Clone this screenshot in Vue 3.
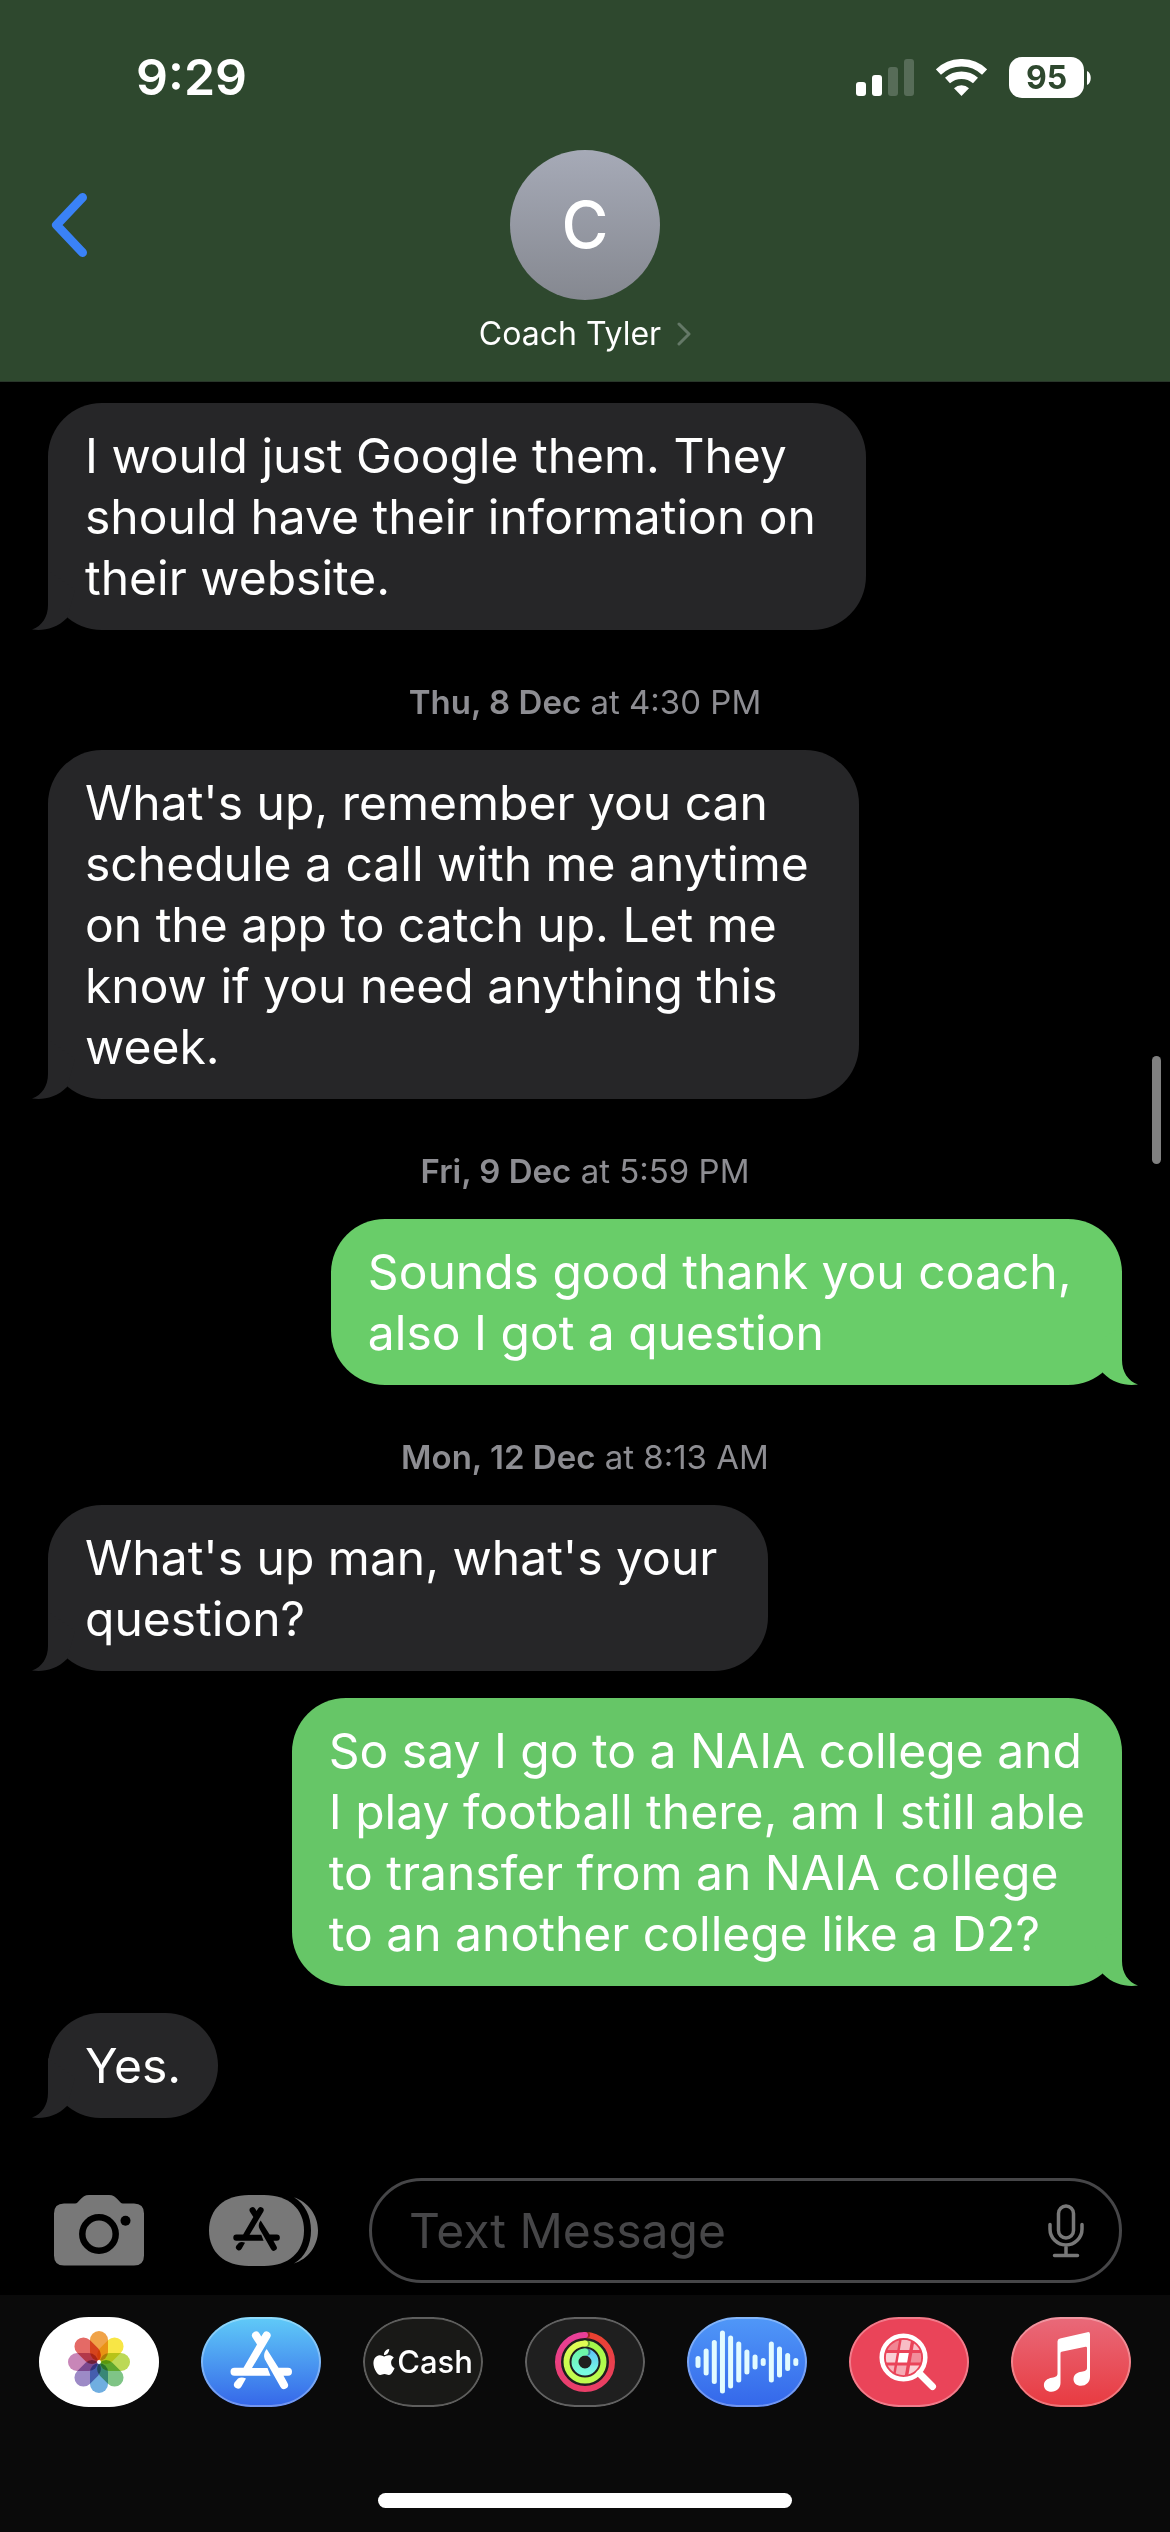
<template>
  <div class="phone">
    <header class="top">
      <div class="status-bar">
        <span class="clock">9:29</span>
        <div class="status-icons">
          <svg class="signal" viewBox="0 0 58 37" aria-label="Signal">
            <rect x="0" y="23" width="10" height="14" rx="3" />
            <rect x="16" y="16" width="10" height="21" rx="3" />
            <rect class="off" x="32" y="8" width="10" height="29" rx="3" />
            <rect class="off" x="48" y="0" width="10" height="37" rx="3" />
          </svg>
          <svg class="wifi" viewBox="0 0 51 37" aria-label="Wi-Fi">
            <path class="arc" d="M2.4 13A33.3 33.3 0 0 1 48.6 13" />
            <path class="arc" d="M11.5 21.6A20.8 20.8 0 0 1 39.5 21.6" />
            <path class="dot" d="M25.5 37L18 29.2A11.3 11.3 0 0 1 33 29.2z" />
          </svg>
          <div class="battery">
            <span class="level">95</span>
            <svg class="nub" viewBox="0 0 4 14"><path d="M0 0C5 2 5 12 0 14z" /></svg>
          </div>
        </div>
      </div>

      <nav class="nav-row">
        <button class="back" type="button" aria-label="Back">
          <svg viewBox="0 0 38 64"><path d="M32.5 4.5L6.5 32l26 27.5" /></svg>
        </button>
        <button class="contact" type="button">
          <span class="avatar">C</span>
          <span class="name">
            {{ contact }}
            <svg viewBox="0 0 14 24"><path d="M2 2l10 10L2 22" /></svg>
          </span>
        </button>
      </nav>
    </header>

    <main class="thread">
      <template v-for="(item, i) in thread" :key="i">
        <p v-if="item.day" class="stamp"><b>{{ item.day }}</b> at {{ item.time }}</p>
        <div v-else class="bubble" :class="[item.from, { late: item.late }]">
          <span v-text="item.text"></span>
          <svg class="tail" viewBox="0 0 44 60">
            <path d="M17 0V35C17 47 11 56 1 59.5C12 61 25 59 36 48L44 20z" />
          </svg>
        </div>
      </template>
      <div class="scroll-thumb"></div>
    </main>

    <form class="composer" @submit.prevent>
      <button class="tool camera" type="button" aria-label="Camera">
        <svg viewBox="0 0 90 71">
          <path d="M10 8.5H21C25 8.5 27 0 35 0H55C63 0 65 8.5 69 8.5H80Q90 8.5 90 18.5V60.5Q90 70.5 80 70.5H10Q0 70.5 0 60.5V18.5Q0 8.5 10 8.5z" />
          <circle class="lens" cx="45" cy="39" r="16.7" />
          <circle class="flash" cx="71.5" cy="25.7" r="5" />
        </svg>
      </button>
      <button class="tool apps" type="button" aria-label="Apps">
        <svg viewBox="0 0 109 71">
          <path d="M40 0H55C80 0 95 14 95 35.5S80 71 55 71H40C15 71 0 57 0 35.5S15 0 40 0z" />
          <path d="M85 2.3C99 7 109 20 109 35.5S99 64 85 68.500C96 62 102 50 102 35.5S96 9 85 2.3z" />
          <g class="cut" transform="translate(47.6 34) scale(.757) translate(-60.3 -43.3)">
            <path v-for="d in storeGlyph" :key="d" :d="d" />
          </g>
        </svg>
      </button>
      <div class="field">
        <input v-model="draft" type="text" placeholder="Text Message" aria-label="Text Message" />
        <button class="mic" type="button" aria-label="Dictate">
          <svg viewBox="0 0 36 54">
            <rect x="10.5" y="2" width="15" height="32" rx="7.5" />
            <path d="M2 20.5V25a16 16 0 0 0 32 0V20.5M18 41V51M6.5 51.5H29.5" />
          </svg>
        </button>
      </div>
    </form>

    <footer class="drawer">
      <div class="app-row">
        <button class="app photos" type="button" aria-label="Photos">
          <svg viewBox="0 0 120 90">
            <rect
              v-for="(c, i) in petals"
              :key="c"
              class="petal"
              x="51" y="14" width="18" height="30" rx="9"
              :fill="c"
              :transform="`rotate(${i * 45} 60 45)`"
            />
            <circle cx="60" cy="45" r="2" fill="#fff" />
          </svg>
        </button>

        <button class="app store" type="button" aria-label="App Store">
          <svg viewBox="0 0 120 90"><path v-for="d in storeGlyph" :key="d" :d="d" /></svg>
        </button>

        <button class="app cash" type="button">
          <svg class="apple" viewBox="2 0 20 24" aria-label="Apple">
            <path d="M12.152 6.896c-.948 0-2.415-1.078-3.96-1.04-2.04.027-3.91 1.183-4.961 3.014-2.117 3.675-.546 9.103 1.519 12.09 1.013 1.454 2.208 3.09 3.792 3.039 1.52-.065 2.09-.987 3.935-.987 1.831 0 2.35.987 3.96.948 1.637-.026 2.676-1.48 3.676-2.948 1.156-1.688 1.636-3.325 1.662-3.415-.039-.013-3.182-1.221-3.22-4.857-.026-3.04 2.48-4.494 2.597-4.559-1.429-2.09-3.623-2.324-4.39-2.376-2-.156-3.675 1.09-4.61 1.09zM15.53 3.83c.843-1.012 1.4-2.427 1.245-3.83-1.207.052-2.662.805-3.532 1.818-.78.896-1.454 2.338-1.273 3.714 1.338.104 2.715-.688 3.559-1.701" />
          </svg>
          <span>Cash</span>
        </button>

        <button class="app fitness" type="button" aria-label="Fitness">
          <svg viewBox="0 0 120 90">
            <defs>
              <template v-for="r in rings" :key="r.r">
                <linearGradient :id="`a${r.r}`" gradientUnits="userSpaceOnUse" x1="0" x2="0" :y1="45 - r.r" :y2="45 + r.r">
                  <stop offset="0" :stop-color="r.start" />
                  <stop offset="1" :stop-color="r.mid" />
                </linearGradient>
                <linearGradient :id="`b${r.r}`" gradientUnits="userSpaceOnUse" x1="0" x2="0" :y1="45 - r.r" :y2="45 + r.r">
                  <stop offset="0" :stop-color="r.end" />
                  <stop offset="1" :stop-color="r.mid" />
                </linearGradient>
              </template>
            </defs>
            <g v-for="r in rings" :key="r.r" fill="none" :stroke-width="r.w">
              <path :d="`M60 ${45 - r.r}A${r.r} ${r.r} 0 0 1 60 ${45 + r.r}`" :stroke="`url(#a${r.r})`" />
              <circle cx="62" :cy="45 - r.r" :r="r.w / 2" fill="#000" opacity=".35" />
              <path :d="`M60 ${45 + r.r}A${r.r} ${r.r} 0 0 1 60 ${45 - r.r}`" :stroke="`url(#b${r.r})`" />
              <circle cx="60" :cy="45 - r.r" :r="r.w / 2" :fill="r.end" />
            </g>
          </svg>
        </button>

        <button class="app audio" type="button" aria-label="Audio">
          <svg viewBox="0 0 120 90">
            <rect
              v-for="(h, i) in wave"
              :key="i"
              :x="8.5 + i * 8.15"
              :y="45 - h / 2"
              width="5"
              :height="h"
              rx="2.5"
            />
          </svg>
        </button>

        <button class="app images" type="button" aria-label="#images">
          <svg viewBox="0 0 120 90">
            <clipPath id="lens"><circle cx="54.5" cy="40.5" r="17.7" /></clipPath>
            <g clip-path="url(#lens)">
              <g transform="translate(54.5 40.5) skewX(-10)">
                <rect
                  v-for="(a, i) in tiles"
                  :key="i"
                  :x="[-18, -5, 8][i % 3]"
                  :y="[-18, -4.5, 8][Math.floor(i / 3)]"
                  :width="[10.5, 9.5, 14][i % 3]"
                  :height="[10.5, 9.5, 12][Math.floor(i / 3)]"
                  fill="#fff"
                  :opacity="a"
                />
              </g>
            </g>
            <circle class="rim" cx="54.5" cy="40.5" r="21.8" />
            <path class="handle" d="M70.5 56.5L83.5 69.5" />
          </svg>
        </button>

        <button class="app music" type="button" aria-label="Music">
          <svg viewBox="0 0 120 90">
            <path d="M46.5 24.5q0-2.4 2.5-3L76.5 15.2q2.5-.5 2.5 2V60c0 5-4 8.8-9 8.8c-4.5 0-7.5-2.7-7.5-6.5c0-4.5 3.5-6.8 8-7.5c3.5-.6 5.5-1.2 5.5-4V31q0-1.5-1.5-1.2L50.5 34.8q-1 .3-1 1.5V66c0 5-4 8.7-9 8.7c-4.5 0-7.6-2.7-7.6-6.5c0-4.4 3.3-6.7 8-7.5c3.5-.6 5.6-1.3 5.6-4.2z" />
          </svg>
        </button>
      </div>
      <div class="home-bar"></div>
    </footer>
  </div>
</template>

<script setup>
import { ref } from 'vue'

const contact = 'Coach Tyler'
const draft = ref('')

// the space before each line break counts in the bubble width
const thread = [
  { from: 'received', text: 'I would just Google them. They \nshould have their information on \ntheir website.' },
  { day: 'Thu, 8 Dec', time: '4:30 PM' },
  { from: 'received', text: "What's up, remember you can \nschedule a call with me anytime \non the app to catch up. Let me \nknow if you need anything this \nweek." },
  { day: 'Fri, 9 Dec', time: '5:59 PM' },
  { from: 'sent', text: 'Sounds good thank you coach, \nalso I got a question' },
  { day: 'Mon, 12 Dec', time: '8:13 AM' },
  { from: 'received', text: "What's up man, what's your \nquestion?" },
  { from: 'sent', late: true, text: 'So say I go to a NAIA college and\nI play football there, am I still able\nto transfer from an NAIA college\nto an another college like a D2?' },
  { from: 'received', text: 'Yes.' }
]

const storeGlyph = [
  'M51.5 20.5a4 4 0 0 1 7-4l1.8 3 1.8-3a4 4 0 0 1 7 4L51 51H66.5L69.5 58.7H33.5a4 4 0 0 1 0-8H42.5L56 27.5z',
  'M65.7 32C62.5 36 62.5 40 64.5 43.5L79.5 70a4 4 0 0 0 7-4L82.5 58.7H87a4 4 0 0 0 0-8H77.5z',
  'M37 61.5Q40.5 59.5 45 61.5L40.5 69.5a4 4 0 0 1-7-4z'
]

const petals = ['#f0a348', '#f8e645', '#bcd956', '#7fc486', '#70aee0', '#9c8ac6', '#c886b8', '#e46a66']

const rings = [
  { r: 27, w: 6, start: '#ea4130', mid: '#e93f68', end: '#e93f98' },
  { r: 18.5, w: 6, start: '#a2f94b', mid: '#bdfc4e', end: '#e0fb54' },
  { r: 10, w: 7, start: '#5fc8f6', mid: '#78fbe0', end: '#6cf6a8' }
]

const wave = [12, 27, 44, 63, 53, 41, 25, 15, 8, 41, 31, 18, 8]

const tiles = [0.35, 0.65, 0.65, 0.75, 1, 0.4, 0.6, 0.55, 0.75]
</script>

<style>
body {
  margin: 0;
  background: #000;
}
</style>

<style scoped>
.phone {
  min-height: 100vh;
  display: flex;
  flex-direction: column;
  background: #000;
  color: #fff;
  font-family: Inter, "Liberation Sans", sans-serif;
}

button {
  padding: 0;
  border: 0;
  background: none;
  color: inherit;
  font: inherit;
  cursor: pointer;
}

svg {
  display: block;
}

/* Header */
.top {
  box-sizing: border-box;
  padding: 57px 0 27px;
  background: #2e482e;
  border-bottom: 1px solid #29362a;
}

.status-bar {
  display: flex;
  justify-content: space-between;
  align-items: center;
  height: 41px;
  padding: 0 79px 0 136px;
}

.clock {
  font-size: 50px;
  line-height: 41px;
  font-weight: 600;
}

.status-icons {
  display: flex;
  align-items: center;
  gap: 22px;
}

.signal {
  width: 58px;
  height: 37px;
  fill: #fff;
}

.signal .off {
  fill: #576c58;
}

.wifi {
  width: 51px;
  height: 37px;
}

.wifi .arc {
  fill: none;
  stroke: #fff;
  stroke-width: 7.4;
}

.wifi .dot {
  fill: #fff;
}

.battery {
  display: flex;
  align-items: center;
  gap: 3px;
}

.level {
  width: 75px;
  border-radius: 13px;
  background: #fff;
  color: #2e482e;
  font-size: 32px;
  line-height: 41px;
  font-weight: 700;
  text-align: center;
}

.nub {
  width: 4px;
  height: 14px;
  fill: #fff;
}

.nav-row {
  display: grid;
  grid-template-columns: 1fr auto 1fr;
  align-items: start;
  padding: 52px 50px 0;
}

.back {
  display: flex;
  align-items: center;
  height: 150px;
}

.back svg {
  width: 38px;
  height: 64px;
  fill: none;
  stroke: #3a82f7;
  stroke-width: 9;
  stroke-linecap: round;
  stroke-linejoin: round;
}

.contact {
  display: flex;
  flex-direction: column;
  align-items: center;
  gap: 14px;
}

.avatar {
  width: 150px;
  border-radius: 50%;
  background: linear-gradient(#a6aab7, #858890);
  font-size: 64px;
  line-height: 150px;
  font-weight: 500;
}

.name {
  display: flex;
  align-items: center;
  gap: 16px;
  font-size: 32px;
  line-height: 40px;
}

.name svg {
  width: 14px;
  height: 24px;
  fill: none;
  stroke: #647867;
  stroke-width: 3;
  stroke-linecap: round;
  stroke-linejoin: round;
}

/* Messages */
.thread {
  position: relative;
  flex: 1;
  display: flex;
  flex-direction: column;
  align-items: flex-start;
  padding: 21px 48px 60px;
}

.bubble {
  position: relative;
  box-sizing: border-box;
  padding: 22px 37px;
  border-radius: 54px;
  font-size: 48px;
  line-height: 61px;
}

.bubble span {
  display: block;
  white-space: pre;
}

.bubble + .bubble {
  margin-top: 27px;
}

.received {
  background: #262628;
}

.sent {
  align-self: flex-end;
  background: #69cd69;
}

.sent.late {
  background: #66c667;
}

.tail {
  position: absolute;
  left: -17px;
  bottom: 0;
  width: 44px;
  height: 60px;
  fill: #262628;
}

.sent .tail {
  left: auto;
  right: -17px;
  transform: scaleX(-1);
  fill: #69cd69;
}

.late .tail {
  fill: #66c667;
}

.stamp {
  align-self: center;
  margin: 52px 0 28px;
  color: #8d8d92;
  font-size: 33px;
  line-height: 40px;
}

.stamp b {
  font-weight: 600;
}

.scroll-thumb {
  position: absolute;
  top: 37.5%;
  right: 9px;
  width: 9px;
  height: 108px;
  border-radius: 5px;
  background: #808080;
}

/* Composer */
.composer {
  display: flex;
  align-items: center;
  padding: 0 48px 12px 54px;
}

.tool svg {
  height: 71px;
  fill: #787878;
}

.camera svg {
  width: 90px;
}

.camera .lens {
  fill: none;
  stroke: #000;
  stroke-width: 6.5;
}

.camera .flash,
.apps .cut {
  fill: #000;
}

.apps {
  margin: 0 51px 0 65px;
}

.apps svg {
  width: 109px;
}

.field {
  flex: 1;
  min-width: 0;
  box-sizing: border-box;
  display: flex;
  align-items: center;
  height: 105px;
  padding: 0 35px 0 37px;
  border: 3px solid #464648;
  border-radius: 53px;
}

.field input {
  flex: 1;
  min-width: 0;
  padding: 0;
  border: 0;
  outline: none;
  background: none;
  color: #fff;
  font: inherit;
  font-size: 48px;
  line-height: 61px;
}

.field input::placeholder {
  color: #464648;
  opacity: 1;
}

.mic svg {
  width: 36px;
  height: 54px;
  fill: none;
  stroke: #787878;
  stroke-width: 3.5;
  stroke-linecap: round;
}

/* App drawer */
.drawer {
  display: flex;
  flex-direction: column;
  gap: 86px;
  padding: 22px 39px 24px;
  background: #0a0a0a;
}

.app-row {
  display: flex;
  justify-content: space-between;
}

.app {
  box-sizing: border-box;
  position: relative;
  display: flex;
  align-items: center;
  justify-content: center;
  width: 120px;
  height: 90px;
  border-radius: 50px / 45px;
  overflow: hidden;
}

.app::after {
  content: "";
  position: absolute;
  inset: 0;
  border: 2px solid rgba(255, 255, 255, 0.3);
  border-radius: inherit;
}

.app > svg {
  width: 120px;
  height: 90px;
  fill: #fff;
}

.photos {
  background: #fff;
}

.petal {
  mix-blend-mode: multiply;
}

.store {
  background: linear-gradient(#60cbf8, #3566e9);
}

.cash {
  gap: 2px;
  background: #191917;
  font-size: 31px;
  line-height: 40px;
  font-weight: 500;
}

.app > .apple {
  width: 22px;
  height: 26px;
}

.fitness {
  background: #1f1f1f;
}

.fitness > svg {
  fill: none;
}

.audio {
  background: linear-gradient(#5098f8, #3467ea);
}

.audio > svg {
  fill: #e2fbff;
}

.images {
  background: #ea4459;
}

.rim,
.handle {
  fill: none;
  stroke: #fff;
  stroke-width: 4.5;
  stroke-linecap: round;
}

.handle {
  stroke-width: 7;
}

.music {
  background: linear-gradient(#e96a7a, #e83a40);
}

.home-bar {
  align-self: center;
  width: 38%;
  height: 15px;
  border-radius: 8px;
  background: #fff;
}
</style>
